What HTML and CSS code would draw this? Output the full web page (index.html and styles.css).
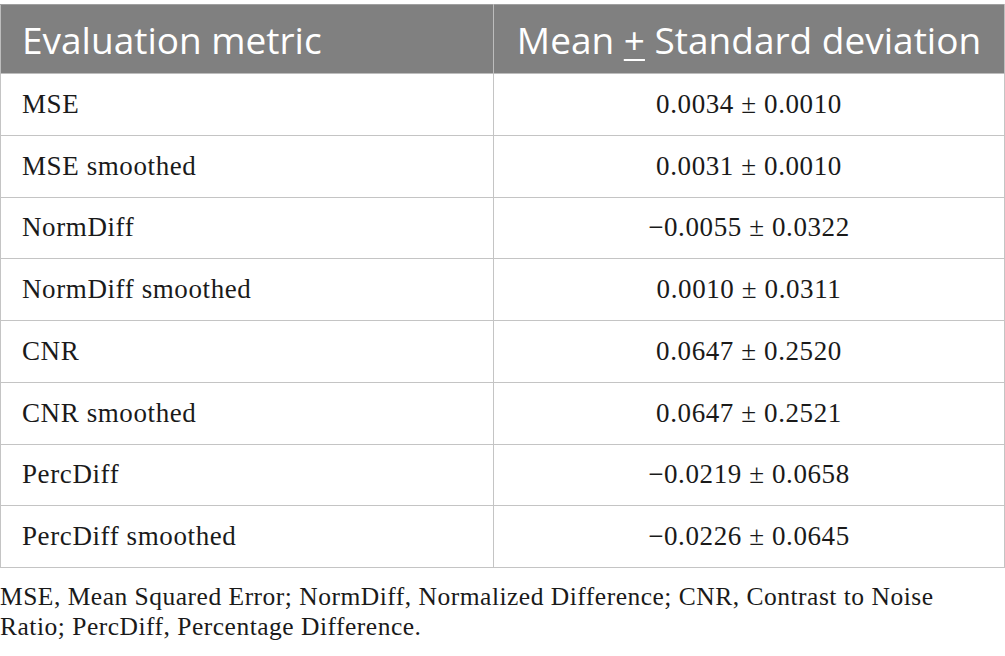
FILE: index.html
```html
<!DOCTYPE html>
<html lang="en">
<head>
    <meta charset="UTF-8">
    <title>Evaluation metrics</title>
    <link rel="stylesheet" href="styles.css">
</head>
<body>
    <table class="metrics">
        <thead>
            <tr>
                <th class="col-name">Evaluation metric</th>
                <th class="col-value">Mean <span class="pm">+</span> Standard deviation</th>
            </tr>
        </thead>
        <tbody>
            <tr><td>MSE</td><td class="num">0.0034 ± 0.0010</td></tr>
            <tr><td>MSE smoothed</td><td class="num">0.0031 ± 0.0010</td></tr>
            <tr><td>NormDiff</td><td class="num">−0.0055 ± 0.0322</td></tr>
            <tr><td>NormDiff smoothed</td><td class="num">0.0010 ± 0.0311</td></tr>
            <tr><td>CNR</td><td class="num">0.0647 ± 0.2520</td></tr>
            <tr><td>CNR smoothed</td><td class="num">0.0647 ± 0.2521</td></tr>
            <tr><td>PercDiff</td><td class="num">−0.0219 ± 0.0658</td></tr>
            <tr><td>PercDiff smoothed</td><td class="num">−0.0226 ± 0.0645</td></tr>
        </tbody>
    </table>
    <p class="footnote">MSE, Mean Squared Error; NormDiff, Normalized Difference; CNR, Contrast to Noise Ratio; PercDiff, Percentage Difference.</p>
</body>
</html>
```

FILE: styles.css
```css
body {
    margin: 0;
    padding-top: 4px;
    background-color: #fff;
    color: #1a1a1a;
    font-family: "Liberation Serif", "Times New Roman", serif;
}
.metrics {
    width: 1005px;
    border-collapse: collapse;
}
.metrics th {
    background-color: #808080;
    color: #fff;
    font-family: "Open Sans", "Noto Sans", sans-serif;
    font-weight: normal;
    font-size: 37px;
    height: 68px;
    padding: 0 21px;
    border: 1px solid #bdbdbd;
    border-top-color: #a0a0a0;
}
.col-name {
    text-align: left;
    width: 450px;
}
.col-value {
    text-align: center;
}
.pm {
    text-decoration: underline;
    text-decoration-thickness: 2px;
    text-underline-offset: 5px;
}
.metrics td {
    height: 60.75px;
    padding: 0 21px;
    font-size: 27px;
    letter-spacing: 0.6px;
    border: 1px solid #c4c4c4;
}
.metrics .num {
    text-align: center;
}
.footnote {
    margin: 14px 0 0;
    font-size: 25.5px;
    letter-spacing: 0.5px;
    line-height: 30px;
    width: 1000px;
}
```
